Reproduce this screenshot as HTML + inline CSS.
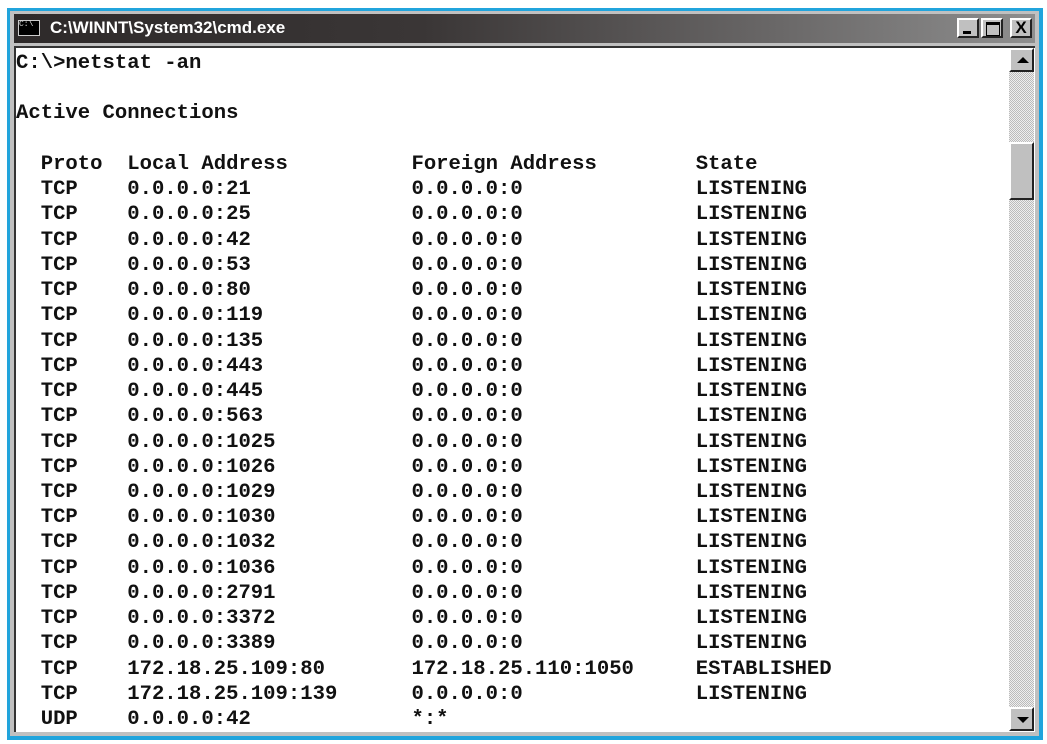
<!DOCTYPE html>
<html><head><style>
body{margin:0;background:#fff;width:1047px;height:744px;position:relative;overflow:hidden}
.cy{position:absolute;left:7px;top:8px;width:1036px;height:732px;background:#21a4dc}
.win{position:absolute;left:10px;top:11px;width:1029px;height:725px;background:#c0c0c0}
.title{position:absolute;left:14px;top:14px;width:1021px;height:29px;background:linear-gradient(90deg,#2e2a2a 0%,#3a3636 40%,#6a6868 75%,#8e8e8e 100%)}
.title span{position:absolute;left:36px;top:4px;color:#fff;font:bold 17px "Liberation Sans",sans-serif}
.ico{position:absolute;left:4px;top:6px;width:22px;height:16px;background:#000;border:1px solid #ccc;box-sizing:border-box;color:#ddd;font:8px "Liberation Mono",monospace;line-height:8px}
.btn{position:absolute;top:4px;width:22px;height:20px;background:#c0c0c0;border-top:2px solid #fff;border-left:2px solid #fff;border-right:2px solid #222;border-bottom:2px solid #222;box-sizing:border-box}
.client{position:absolute;left:14px;top:46px;width:1021px;height:686px;background:#fff;border-top:2px solid #333;border-left:2px solid #333;box-sizing:border-box}
pre{position:absolute;left:16px;top:51px;margin:0;font:bold 20.6px "Liberation Mono",monospace;line-height:25.23px;color:#111}
.sb{position:absolute;left:1009px;top:48px;width:25px;height:683px;background:repeating-conic-gradient(#bbb 0 25%,#eee 0 50%) 0 0/2px 2px}
.sbtn{position:absolute;left:0;width:25px;height:24px;background:#c0c0c0;border-top:2px solid #fff;border-left:2px solid #fff;border-right:2px solid #222;border-bottom:2px solid #222;box-sizing:border-box}
</style></head><body>
<div class="cy"></div><div class="win"></div>
<div class="title"><div class="ico">C:\</div><span>C:\WINNT\System32\cmd.exe</span>
<div class="btn" style="left:943px"><div style="position:absolute;left:4px;top:11px;width:8px;height:3px;background:#000"></div></div>
<div class="btn" style="left:967px"><div style="position:absolute;left:3px;top:2px;width:12px;height:10px;border:1px solid #000;border-top-width:3px"></div></div>
<div class="btn" style="left:996px;font:bold 17px 'Liberation Sans',sans-serif;text-align:center;line-height:16px">X</div>
</div>
<div class="client"></div>
<div class="sb">
<div class="sbtn" style="top:0"><div style="position:absolute;left:6px;top:7px;border-left:6px solid transparent;border-right:6px solid transparent;border-bottom:6px solid #000"></div></div>
<div class="sbtn" style="top:94px;height:58px"></div>
<div class="sbtn" style="top:659px"><div style="position:absolute;left:6px;top:8px;border-left:6px solid transparent;border-right:6px solid transparent;border-top:6px solid #000"></div></div>
</div>
<pre>C:\&gt;netstat -an

Active Connections

  Proto  Local Address          Foreign Address        State
  TCP    0.0.0.0:21             0.0.0.0:0              LISTENING
  TCP    0.0.0.0:25             0.0.0.0:0              LISTENING
  TCP    0.0.0.0:42             0.0.0.0:0              LISTENING
  TCP    0.0.0.0:53             0.0.0.0:0              LISTENING
  TCP    0.0.0.0:80             0.0.0.0:0              LISTENING
  TCP    0.0.0.0:119            0.0.0.0:0              LISTENING
  TCP    0.0.0.0:135            0.0.0.0:0              LISTENING
  TCP    0.0.0.0:443            0.0.0.0:0              LISTENING
  TCP    0.0.0.0:445            0.0.0.0:0              LISTENING
  TCP    0.0.0.0:563            0.0.0.0:0              LISTENING
  TCP    0.0.0.0:1025           0.0.0.0:0              LISTENING
  TCP    0.0.0.0:1026           0.0.0.0:0              LISTENING
  TCP    0.0.0.0:1029           0.0.0.0:0              LISTENING
  TCP    0.0.0.0:1030           0.0.0.0:0              LISTENING
  TCP    0.0.0.0:1032           0.0.0.0:0              LISTENING
  TCP    0.0.0.0:1036           0.0.0.0:0              LISTENING
  TCP    0.0.0.0:2791           0.0.0.0:0              LISTENING
  TCP    0.0.0.0:3372           0.0.0.0:0              LISTENING
  TCP    0.0.0.0:3389           0.0.0.0:0              LISTENING
  TCP    172.18.25.109:80       172.18.25.110:1050     ESTABLISHED
  TCP    172.18.25.109:139      0.0.0.0:0              LISTENING
  UDP    0.0.0.0:42             *:*</pre>
</body></html>
